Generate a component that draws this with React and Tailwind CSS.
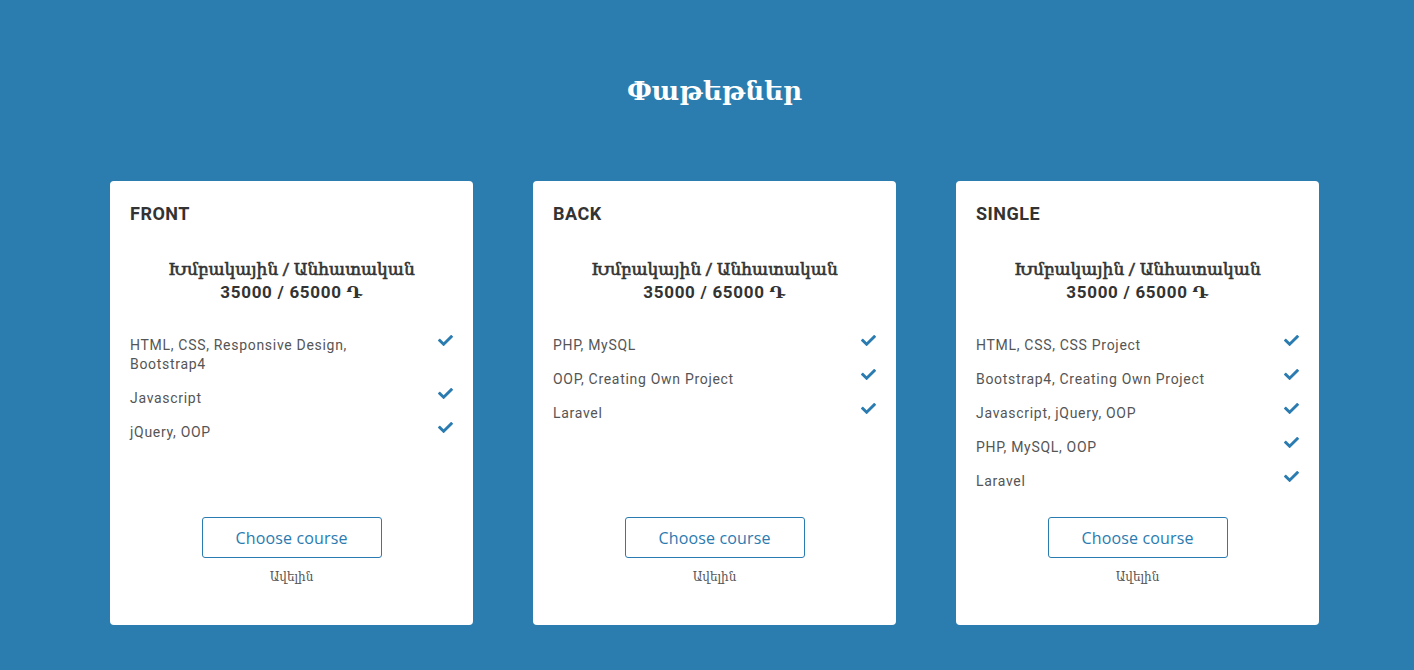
import { FaCheck } from 'react-icons/fa';

const font = { fontFamily: 'Roboto, "DejaVu Serif", serif' };

const packages = [
  {
    name: 'FRONT',
    items: ['HTML, CSS, Responsive Design, Bootstrap4', 'Javascript', 'jQuery, OOP'],
  },
  {
    name: 'BACK',
    items: ['PHP, MySQL', 'OOP, Creating Own Project', 'Laravel'],
  },
  {
    name: 'SINGLE',
    items: [
      'HTML, CSS, CSS Project',
      'Bootstrap4, Creating Own Project',
      'Javascript, jQuery, OOP',
      'PHP, MySQL, OOP',
      'Laravel',
    ],
  },
];

// ── Card ──
const PackageCard = ({ pkg }) => (
  <div className="w-[363px] h-[444px] bg-white rounded-[4px] flex flex-col px-5 pt-[21px] pb-[39px]">
    <h3 className="text-[18px] leading-6 font-bold text-[#333] tracking-[0.5px]">{pkg.name}</h3>

    <div className="mt-[32px] text-center text-[17px] leading-[23px] text-[#333]">
      <p className="font-normal [-webkit-text-stroke:0.6px_#333]">Խմբակային / Անհատական</p>
      <p className="font-bold tracking-[0.7px]">35000 / 65000 Դ</p>
    </div>

    <ul className="mt-[32px] flex flex-col gap-[15px]">
      {pkg.items.map(item => (
        <li key={item} className="flex items-start">
          <span className="w-[250px] text-[14px] leading-[19px] text-[#555] tracking-[0.7px]">{item}</span>
          <FaCheck className="ml-auto mt-[-3px] text-[#2a7bb0]" size={15} />
        </li>
      ))}
    </ul>

    <div className="mt-auto flex flex-col items-center">
      <button
        className="w-[180px] h-[41px] border border-[#2a7bb0] rounded-[3px] text-[#2a7bb0] text-[16px] tracking-[0.15px]"
        style={{ fontFamily: '"Open Sans", sans-serif' }}
      >
        Choose course
      </button>
      <a className="mt-[10px] text-[12px] leading-[18px] text-[#555]">Ավելին</a>
    </div>
  </div>
);

export default function App() {
  return (
    <div className="min-h-[670px] w-full bg-[#2c7daf] pl-[15px] pt-[71px] pb-[45px]" style={font}>
      <h1 className="text-center text-white text-[26px] font-bold leading-10">Փաթեթներ</h1>
      <div className="mt-[70px] flex justify-center gap-[60px]">
        {packages.map(p => (
          <PackageCard key={p.name} pkg={p} />
        ))}
      </div>
    </div>
  );
}
